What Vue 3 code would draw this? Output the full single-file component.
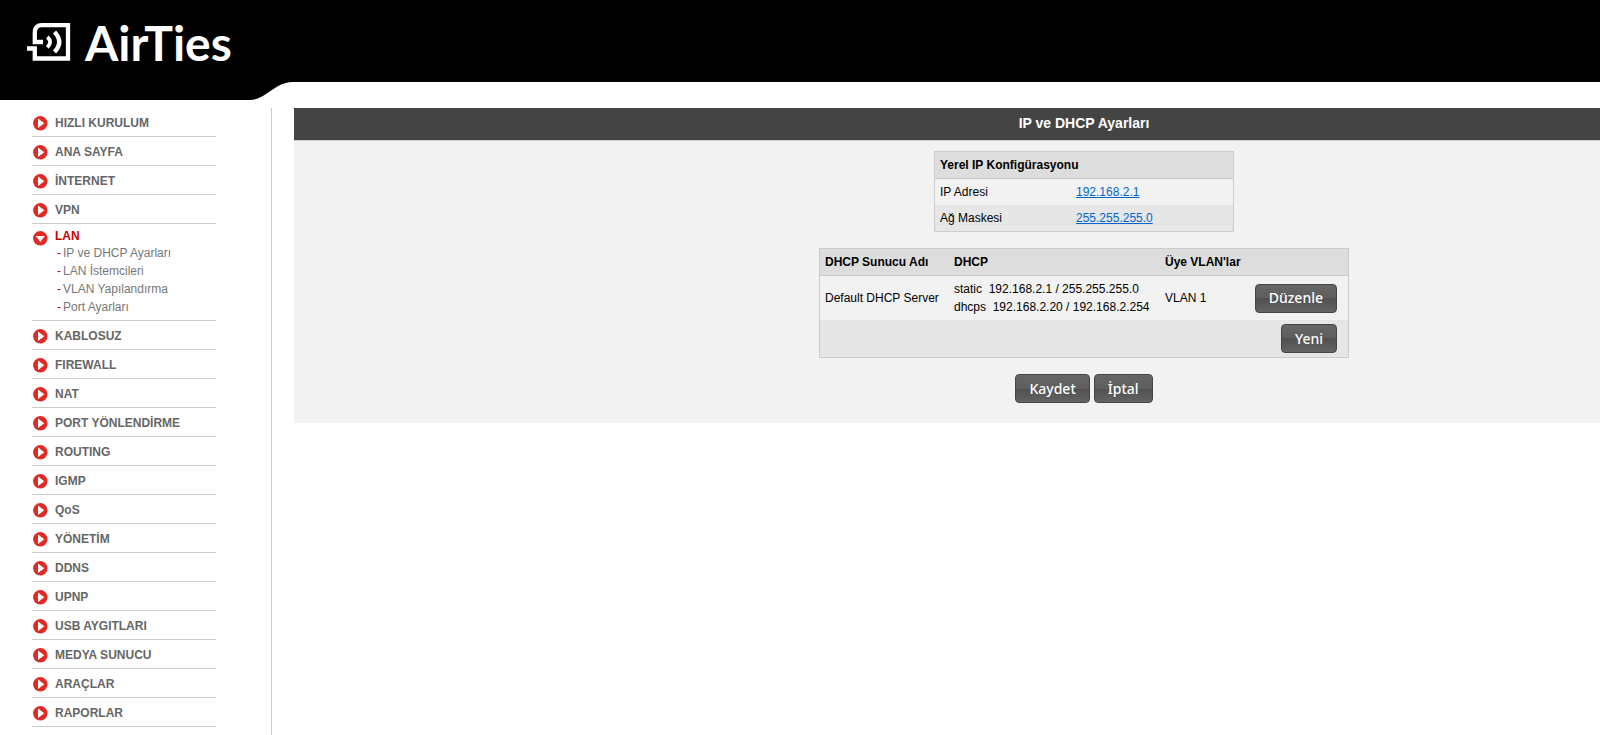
<template>
    <div class="page">
        <header class="header">
            <div class="brand">
                <svg class="logo-mark" viewBox="0 0 44 38" width="44" height="38" aria-hidden="true">
                    <path d="M16 19H7.800V10Q7.800 2.200 15 2.200H41V35.500H7.800V25.500H0" fill="none" stroke="#fff"
                        stroke-width="4.300" />
                    <path d="M20.300 14Q26 19 20.300 24.400" fill="none" stroke="#fff" stroke-width="3.800" />
                    <path d="M27.500 9Q37 19 27.500 29" fill="none" stroke="#fff" stroke-width="4.300" />
                </svg>
                <span class="logo-text">AirTies</span>
            </div>
            <svg class="header-curve" viewBox="0 0 42 18" width="42" height="18" aria-hidden="true">
                <path d="M0 0H42C26 0 15 18 0 18Z" fill="#000" />
            </svg>
        </header>

        <div class="body">
            <nav class="sidebar">
                <ul class="menu">
                    <li v-for="item in menu" :key="item.label" class="menu-item" :class="{ 'is-open': item.children }">
                        <a href="#" class="menu-link">
                            <svg class="menu-icon" viewBox="0 0 15 15" width="15" height="15" aria-hidden="true">
                                <circle cx="7.300" cy="7.300" r="7.200" fill="#df2a26" />
                                <path v-if="item.children" d="M2.800 5H11.800L7.300 11Z" fill="#fff" />
                                <path v-else d="M5 2.500L11.300 7.300L5 12Z" fill="#fff" />
                            </svg>
                            <span>{{ item.label }}</span>
                        </a>
                        <ul v-if="item.children" class="submenu">
                            <li v-for="child in item.children" :key="child">
                                <a href="#">{{ child }}</a>
                            </li>
                        </ul>
                    </li>
                </ul>
            </nav>

            <main class="main">
                <h1 class="title">IP ve DHCP Ayarları</h1>
                <div class="content">
                    <table class="grid ip-table">
                        <thead>
                            <tr>
                                <th colspan="2">Yerel IP Konfigürasyonu</th>
                            </tr>
                        </thead>
                        <tbody>
                            <tr v-for="row in ipRows" :key="row.label">
                                <td class="ip-label">{{ row.label }}</td>
                                <td><a href="#">{{ row.value }}</a></td>
                            </tr>
                        </tbody>
                    </table>

                    <table class="grid dhcp-table">
                        <thead>
                            <tr>
                                <th class="col-name">DHCP Sunucu Adı</th>
                                <th class="col-dhcp">DHCP</th>
                                <th class="col-vlan">Üye VLAN'lar</th>
                                <th></th>
                            </tr>
                        </thead>
                        <tbody>
                            <tr v-for="server in servers" :key="server.name">
                                <td>{{ server.name }}</td>
                                <td class="dhcp-cell">
                                    <div v-for="line in server.lines" :key="line.type">
                                        {{ line.type }}&nbsp; {{ line.range }}
                                    </div>
                                </td>
                                <td>{{ server.vlan }}</td>
                                <td class="action"><button type="button" class="btn">Düzenle</button></td>
                            </tr>
                            <tr>
                                <td colspan="4" class="action"><button type="button" class="btn">Yeni</button></td>
                            </tr>
                        </tbody>
                    </table>

                    <div class="buttons">
                        <button type="button" class="btn">Kaydet</button>
                        <button type="button" class="btn">İptal</button>
                    </div>
                </div>
            </main>
        </div>
    </div>
</template>

<script setup>
const menu = [
    { label: 'HIZLI KURULUM' },
    { label: 'ANA SAYFA' },
    { label: 'İNTERNET' },
    { label: 'VPN' },
    {
        label: 'LAN',
        children: ['IP ve DHCP Ayarları', 'LAN İstemcileri', 'VLAN Yapılandırma', 'Port Ayarları']
    },
    { label: 'KABLOSUZ' },
    { label: 'FIREWALL' },
    { label: 'NAT' },
    { label: 'PORT YÖNLENDİRME' },
    { label: 'ROUTING' },
    { label: 'IGMP' },
    { label: 'QoS' },
    { label: 'YÖNETİM' },
    { label: 'DDNS' },
    { label: 'UPNP' },
    { label: 'USB AYGITLARI' },
    { label: 'MEDYA SUNUCU' },
    { label: 'ARAÇLAR' },
    { label: 'RAPORLAR' }
];

const ipRows = [
    { label: 'IP Adresi', value: '192.168.2.1' },
    { label: 'Ağ Maskesi', value: '255.255.255.0' }
];

const servers = [
    {
        name: 'Default DHCP Server',
        lines: [
            { type: 'static', range: '192.168.2.1 / 255.255.255.0' },
            { type: 'dhcps', range: '192.168.2.20 / 192.168.2.254' }
        ],
        vlan: 'VLAN 1'
    }
];
</script>

<style>
body {
    margin: 0;
    background: #fff;
}
</style>

<style scoped>
.page {
    display: flex;
    flex-direction: column;
    min-height: 100vh;
    font-family: "Liberation Sans", Arial, sans-serif;
    font-size: 12px;
    line-height: 18px;
    color: #000;
}

.header {
    display: flex;
    align-items: flex-end;
    height: 100px;
    background: linear-gradient(#000, #000) top / 100% 82px no-repeat;
}

.brand {
    display: flex;
    align-items: flex-start;
    gap: 14px;
    box-sizing: border-box;
    width: 250px;
    height: 100px;
    padding: 23px 0 0 27px;
    background: #000;
}

.logo-mark {
    flex-shrink: 0;
}

.logo-text {
    font-family: Lato, sans-serif;
    font-size: 48px;
    font-weight: 700;
    line-height: 40px;
    color: #fff;
}

.header-curve {
    display: block;
}

.body {
    display: flex;
    flex: 1;
    padding-top: 8px;
}

.sidebar {
    flex-shrink: 0;
    box-sizing: border-box;
    width: 272px;
    padding-left: 32px;
    border-right: 1px solid #ccc;
}

.menu,
.submenu {
    margin: 0;
    padding: 0;
    list-style: none;
}

.menu {
    width: 184px;
}

.menu-item {
    border-bottom: 1px solid #ccc;
}

.menu-link {
    display: flex;
    align-items: center;
    gap: 7px;
    box-sizing: border-box;
    height: 28px;
    padding: 2px 0 0 1px;
    font-weight: bold;
    color: #666;
    text-decoration: none;
}

.menu-icon {
    flex-shrink: 0;
}

.is-open {
    padding: 1px 0 4px;
}

.is-open .menu-link {
    align-items: flex-start;
    height: 19px;
    color: #c00;
}

.is-open .menu-icon {
    margin-top: 4px;
}

.submenu {
    padding-left: 25px;
}

.submenu a {
    display: flex;
    gap: 2px;
    color: #777;
    text-decoration: none;
}

.submenu a::before {
    content: "-";
    color: #c00;
}

.main {
    flex: 1;
    align-self: flex-start;
    margin-left: 22px;
    background: #f2f2f2;
}

.title {
    margin: 0;
    padding: 0 0 2px 274px;
    border-bottom: 1px solid #ccc;
    background: #444;
    color: #fff;
    font-size: 14px;
    line-height: 30px;
    text-align: center;
}

.content {
    display: flex;
    flex-direction: column;
    align-items: center;
    gap: 16px;
    padding: 10px 0 20px 274px;
}

.grid {
    border: 1px solid #ccc;
    border-spacing: 0;
}

.grid th {
    height: 26px;
    padding: 0 5px;
    border-bottom: 1px solid #ccc;
    background: #ddd;
    text-align: left;
}

.grid td {
    height: 26px;
    padding: 0 5px;
}

.grid tbody tr:nth-child(even) {
    background: #e6e6e6;
}

.grid a {
    color: #06c;
}

.ip-table {
    width: 300px;
}

.ip-label {
    width: 126px;
}

.dhcp-table {
    width: 530px;
}

.col-name {
    width: 119px;
}

.col-dhcp {
    width: 201px;
}

.col-vlan {
    width: 80px;
}

.grid .dhcp-cell {
    padding-top: 4px;
    padding-bottom: 4px;
}

.grid .action {
    padding: 4px 11px 4px 0;
    text-align: right;
}

.buttons {
    display: flex;
    gap: 4px;
}

.btn {
    height: 29px;
    padding: 0 13px;
    border: 1px solid #444;
    border-radius: 4px;
    background: linear-gradient(#666, #5e5e5e 50%, #505050 50%, #636363);
    color: #fff;
    font-family: "Noto Sans", sans-serif;
    font-size: 14px;
    font-weight: 500;
    line-height: 18px;
    cursor: pointer;
}
</style>
